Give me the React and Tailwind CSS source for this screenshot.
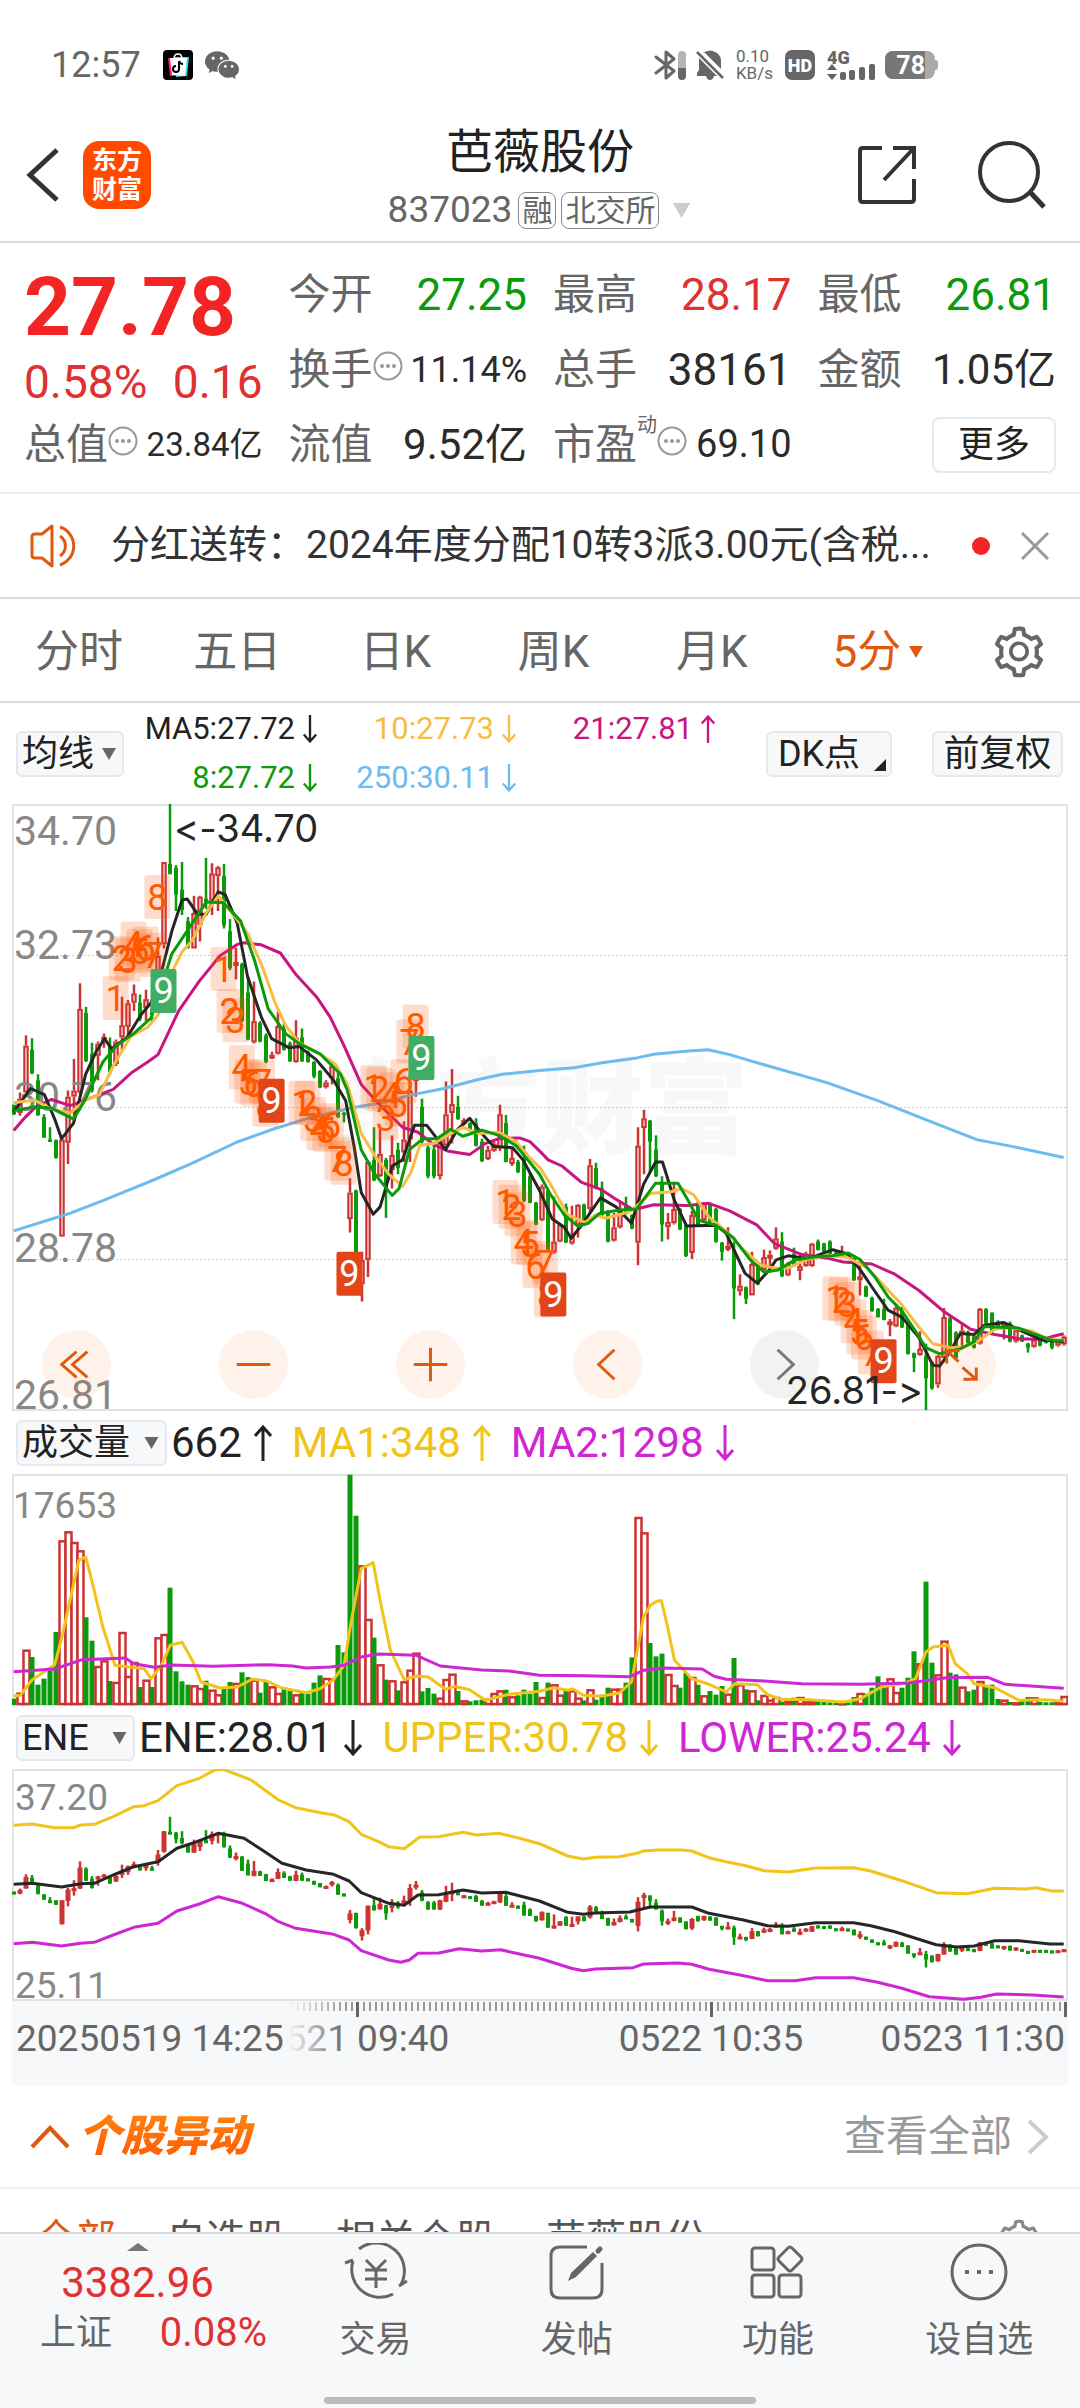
import React from 'react';
import { AiOutlineSetting } from 'react-icons/ai';
import { IoLogoWechat } from 'react-icons/io5';

const GREEN = '#0a9a0a';
const RED = '#cc3333';
const GRAY = '#888888';

/* ----------  Market data  ---------- */
// one row per 5-minute bar: [up, high, body top, body bottom, low, volume top]
const BARS = [
  [0, 795, 795, 818, 820, 865], [1, 765, 780, 815, 822, 847], [1, 625, 650, 765, 765, 718], [0, 632, 660, 718, 720, 740],
  [0, 720, 735, 820, 822, 823], [0, 818, 825, 875, 876, 805], [0, 850, 880, 886, 886, 780], [0, 880, 882, 925, 927, 665],
  [1, 880, 880, 1118, 1118, 390], [1, 760, 775, 888, 940, 363], [1, 683, 760, 775, 835, 395], [1, 497, 560, 765, 770, 420],
  [0, 555, 570, 688, 690, 621], [0, 643, 670, 760, 765, 691], [1, 640, 645, 675, 735, 767], [1, 620, 628, 640, 655, 750],
  [0, 630, 650, 715, 720, 812], [1, 635, 640, 695, 700, 815], [1, 530, 600, 630, 660, 665], [1, 538, 546, 604, 630, 797],
  [1, 500, 522, 545, 565, 755], [0, 525, 545, 585, 590, 830], [1, 513, 536, 558, 590, 808], [0, 541, 560, 575, 590, 830],
  [1, 385, 430, 510, 540, 681], [1, 200, 200, 402, 412, 671], [0, 58, 205, 230, 230, 532], [0, 208, 215, 280, 320, 783],
  [0, 200, 268, 318, 330, 813], [0, 335, 345, 410, 412, 823], [1, 283, 325, 412, 412, 825], [1, 283, 285, 355, 395, 833],
  [0, 190, 290, 300, 315, 811], [1, 203, 228, 295, 330, 838], [1, 210, 213, 235, 320, 852], [0, 205, 235, 355, 363, 833],
  [0, 340, 370, 460, 465, 815], [1, 410, 445, 455, 488, 818], [0, 447, 450, 590, 592, 786], [0, 480, 520, 635, 637, 800],
  [1, 493, 590, 642, 645, 808], [0, 590, 595, 640, 642, 847], [0, 620, 625, 690, 693, 815], [1, 665, 672, 680, 683, 828],
  [1, 567, 602, 670, 672, 848], [0, 595, 610, 660, 662, 835], [0, 640, 645, 688, 690, 840], [1, 588, 630, 690, 692, 852],
  [0, 608, 630, 688, 690, 845], [0, 662, 665, 690, 692, 850], [0, 688, 690, 725, 730, 817], [0, 710, 712, 752, 754, 795],
  [1, 735, 740, 752, 755, 803], [1, 690, 700, 730, 745, 805], [0, 715, 730, 825, 827, 704], [0, 812, 815, 820, 838, 726],
  [1, 975, 1010, 1075, 1108, 193], [0, 1003, 1005, 1155, 1160, 316], [1, 1155, 1175, 1235, 1277, 465], [1, 930, 935, 1175, 1217, 626],
  [0, 850, 930, 980, 982, 682], [1, 855, 915, 970, 972, 762], [0, 925, 930, 1010, 1072, 808], [1, 870, 918, 955, 1000, 810],
  [0, 888, 905, 950, 965, 840], [1, 835, 880, 912, 935, 813], [1, 720, 760, 880, 935, 778], [1, 690, 727, 730, 775, 727],
  [0, 780, 800, 885, 890, 843], [0, 888, 900, 970, 975, 833], [0, 888, 905, 970, 975, 850], [1, 875, 880, 970, 978, 862],
  [1, 738, 818, 895, 900, 806], [1, 707, 793, 815, 890, 790], [0, 773, 800, 830, 832, 842], [1, 828, 832, 838, 845, 870],
  [0, 838, 840, 858, 860, 873], [0, 828, 840, 895, 897, 870], [0, 878, 885, 933, 935, 868], [1, 895, 905, 928, 930, 865],
  [1, 885, 890, 908, 910, 848], [1, 795, 818, 900, 908, 840], [0, 820, 840, 935, 936, 838], [1, 900, 925, 940, 945, 858],
  [0, 930, 935, 960, 962, 855], [0, 895, 925, 1030, 1033, 838], [0, 960, 970, 1035, 1036, 850], [0, 1033, 1035, 1088, 1090, 815],
  [1, 990, 995, 1078, 1080, 860], [0, 1003, 1005, 1150, 1152, 817], [1, 1020, 1130, 1157, 1160, 822], [1, 1085, 1088, 1130, 1132, 853],
  [0, 1037, 1045, 1132, 1134, 840], [1, 1042, 1115, 1135, 1138, 840], [1, 1038, 1040, 1090, 1120, 862], [0, 1037, 1040, 1085, 1088, 870],
  [1, 928, 943, 1050, 1060, 837], [0, 937, 950, 1000, 1002, 868], [0, 983, 1000, 1065, 1067, 853], [0, 1053, 1055, 1130, 1132, 832],
  [1, 1060, 1095, 1128, 1130, 835], [1, 1030, 1055, 1095, 1098, 835], [0, 1020, 1040, 1060, 1064, 817], [0, 1063, 1065, 1098, 1100, 741],
  [1, 850, 895, 1133, 1188, 320], [1, 807, 828, 852, 965, 366], [0, 832, 834, 885, 960, 698], [0, 870, 905, 970, 972, 738],
  [0, 970, 985, 1088, 1130, 730], [1, 1060, 1082, 1095, 1125, 791], [1, 985, 1050, 1085, 1088, 824], [0, 1048, 1050, 1100, 1102, 832],
  [0, 1088, 1090, 1165, 1168, 788], [1, 1055, 1065, 1158, 1173, 800], [0, 1033, 1035, 1088, 1090, 823], [1, 1033, 1035, 1078, 1082, 855],
  [0, 1038, 1040, 1080, 1085, 842], [0, 1048, 1050, 1130, 1133, 853], [0, 1131, 1133, 1155, 1177, 827], [1, 1095, 1140, 1146, 1153, 850],
  [0, 1130, 1150, 1245, 1320, 743], [1, 1210, 1238, 1252, 1262, 822], [0, 1240, 1242, 1270, 1283, 837], [1, 1155, 1185, 1262, 1262, 840],
  [0, 1183, 1185, 1235, 1237, 870], [1, 1150, 1168, 1200, 1202, 854], [1, 1152, 1162, 1170, 1195, 868], [1, 1095, 1122, 1148, 1150, 860],
  [0, 1107, 1130, 1215, 1217, 874], [1, 1180, 1185, 1213, 1215, 872], [0, 1145, 1160, 1190, 1192, 862], [1, 1160, 1190, 1202, 1225, 860],
  [1, 1155, 1160, 1190, 1192, 873], [1, 1133, 1135, 1190, 1192, 872], [0, 1125, 1130, 1150, 1152, 866], [0, 1133, 1135, 1155, 1157, 874],
  [0, 1127, 1130, 1160, 1162, 876], [0, 1155, 1157, 1165, 1166, 878], [1, 1140, 1155, 1165, 1168, 876], [0, 1158, 1160, 1170, 1172, 876],
  [0, 1168, 1170, 1225, 1226, 860], [1, 1185, 1215, 1225, 1262, 848], [0, 1238, 1240, 1265, 1266, 850], [0, 1265, 1268, 1300, 1302, 832],
  [0, 1293, 1295, 1315, 1316, 798], [0, 1270, 1295, 1322, 1323, 822], [1, 1320, 1325, 1330, 1362, 804], [1, 1285, 1292, 1338, 1340, 845],
  [0, 1290, 1300, 1340, 1342, 832], [0, 1323, 1325, 1405, 1407, 802], [0, 1402, 1404, 1415, 1450, 723], [1, 1350, 1393, 1408, 1410, 759],
  [0, 1380, 1410, 1465, 1543, 514], [0, 1423, 1425, 1490, 1493, 757], [1, 1408, 1410, 1480, 1488, 792], [1, 1293, 1315, 1415, 1416, 691],
  [0, 1313, 1318, 1385, 1388, 787], [0, 1350, 1353, 1415, 1418, 792], [1, 1330, 1348, 1358, 1390, 829], [0, 1348, 1352, 1378, 1380, 843],
  [0, 1358, 1362, 1390, 1392, 838], [1, 1293, 1295, 1380, 1382, 812], [0, 1293, 1296, 1330, 1332, 825], [0, 1303, 1305, 1355, 1356, 823],
  [0, 1323, 1326, 1345, 1346, 866], [1, 1328, 1332, 1345, 1370, 868], [0, 1326, 1330, 1375, 1377, 875], [1, 1343, 1347, 1375, 1378, 876],
  [0, 1358, 1360, 1375, 1376, 872], [0, 1378, 1380, 1390, 1402, 860], [1, 1368, 1370, 1388, 1390, 861], [0, 1368, 1370, 1385, 1387, 875],
  [0, 1368, 1370, 1378, 1380, 876], [0, 1373, 1376, 1390, 1394, 876], [1, 1370, 1373, 1385, 1388, 875], [1, 1360, 1363, 1382, 1385, 857],
];

const MA_LINES = [
  { color: '#6cbcf0', points: '41,1104 200,1062 300,1030 450,978 560,938 690,886 800,853 900,827 1020,803 1110,790 1200,770 1290,755 1390,733 1460,720 1568,711 1668,704 1750,692 1850,680 1900,671 2000,663 2058,660 2120,672 2220,697 2400,740 2550,785 2700,835 2840,881 2940,897 3090,924' },
  { color: '#c9157f', points: '41,858 75,825 105,800 150,782 205,797 250,783 330,757 385,715 430,690 460,672 520,565 580,492 640,430 690,402 710,398 760,403 815,423 860,475 920,530 960,580 1000,650 1050,745 1110,800 1170,850 1215,862 1260,892 1300,908 1365,917 1410,890 1450,878 1510,876 1540,885 1568,908 1593,930 1633,945 1690,985 1748,1003 1793,1028 1840,1052 1900,1040 2000,1042 2058,1036 2120,1055 2200,1090 2250,1135 2330,1162 2400,1170 2450,1180 2533,1185 2600,1210 2670,1250 2740,1300 2820,1345 2890,1358 2960,1368 3030,1370 3060,1362 3090,1356' },
  { color: '#262626', points: '41,812 90,755 130,770 160,830 180,878 215,840 250,720 280,665 305,633 325,658 370,630 410,575 440,545 470,470 500,370 530,293 545,291 575,328 600,328 635,273 655,280 690,350 720,480 760,580 790,633 840,655 870,652 920,685 970,735 1005,785 1030,900 1050,1010 1085,1063 1105,1045 1140,945 1170,930 1205,845 1240,845 1295,905 1330,855 1365,828 1400,865 1435,897 1490,900 1520,930 1568,1005 1605,1075 1640,1095 1660,1122 1690,1090 1745,1023 1790,1045 1835,1085 1870,990 1905,935 1925,935 1960,1030 1995,1092 2080,1090 2110,1110 2165,1208 2200,1232 2235,1200 2255,1175 2290,1165 2350,1172 2420,1150 2460,1160 2500,1200 2540,1250 2580,1298 2620,1315 2670,1365 2710,1433 2730,1435 2760,1400 2790,1355 2830,1358 2860,1335 2915,1328 2970,1350 3030,1372 3090,1375' },
  { color: '#f6bd45', points: '41,790 100,783 150,805 205,815 250,783 290,770 330,700 380,628 430,605 460,575 500,470 530,420 560,392 600,325 635,283 670,320 720,375 760,450 800,545 830,600 870,643 920,665 975,695 1010,745 1050,865 1090,920 1130,965 1170,995 1195,960 1220,895 1260,890 1300,870 1345,850 1390,865 1450,862 1500,885 1540,925 1570,950 1600,990 1650,1065 1700,1083 1730,1065 1760,1073 1830,1057 1860,1035 1890,1012 1950,1008 1980,1000 2015,1015 2060,1070 2110,1105 2160,1150 2210,1187 2250,1195 2290,1195 2340,1175 2400,1165 2460,1168 2520,1195 2570,1240 2620,1285 2670,1340 2710,1380 2760,1390 2800,1388 2840,1375 2890,1345 2930,1340 3000,1350 3040,1368 3090,1372' },
  { color: '#0a9a0a', points: '41,810 100,800 150,803 215,830 250,780 300,690 340,650 390,620 440,582 480,480 500,425 560,350 600,298 650,300 700,345 740,440 780,560 830,620 870,645 930,670 990,720 1010,760 1050,905 1090,965 1140,1017 1160,1000 1190,905 1230,878 1270,878 1310,855 1345,872 1400,857 1450,870 1500,895 1568,965 1600,1015 1640,1065 1680,1093 1710,1085 1740,1062 1800,1053 1850,1050 1905,987 1970,987 2000,1030 2030,1078 2080,1090 2130,1120 2180,1175 2220,1205 2260,1200 2310,1175 2370,1167 2420,1165 2465,1158 2500,1175 2540,1215 2580,1265 2620,1300 2660,1350 2690,1390 2730,1405 2790,1393 2830,1375 2860,1338 2960,1342 3000,1355 3060,1373 3090,1373' },
];

const VOLUME_LINES = [
  { color: '#f0c419', points: '41,857 60,855 95,808 160,763 180,685 230,450 250,440 265,500 300,650 335,765 420,775 440,805 470,765 495,705 530,696 562,755 585,815 640,833 690,830 735,806 775,812 820,833 890,847 930,835 970,808 1000,765 1020,640 1050,475 1085,457 1105,570 1135,720 1175,808 1210,797 1245,800 1295,837 1320,828 1365,838 1410,870 1480,852 1568,843 1610,832 1650,840 1665,836 1695,855 1745,858 1800,848 1835,815 1870,620 1890,585 1910,572 1922,571 1940,650 1960,750 2010,805 2060,822 2110,845 2135,820 2200,823 2230,853 2270,867 2350,868 2450,875 2500,865 2560,830 2630,818 2660,805 2690,725 2710,710 2755,705 2775,760 2810,790 2830,820 2890,832 2960,870 3040,868 3090,873' },
  { color: '#cf26d4', points: '41,784 160,776 240,748 365,743 390,760 450,771 500,764 620,768 780,763 850,767 890,773 960,770 1000,765 1050,740 1100,731 1210,735 1280,767 1400,779 1480,782 1568,795 1700,796 1830,799 1870,780 1930,773 2040,776 2075,798 2110,807 2220,812 2330,820 2500,822 2640,818 2750,802 2870,801 2920,822 3090,834' },
];

const ENE_LINES = [
  { color: '#f0c419', points: '41,376 95,372 160,383 215,383 235,375 275,373 330,350 390,320 420,317 460,302 515,257 580,235 625,210 650,208 730,240 810,300 860,323 940,340 970,344 1015,365 1050,403 1100,425 1130,440 1175,446 1220,411 1275,410 1345,397 1385,405 1450,400 1510,415 1568,431 1610,450 1650,468 1695,477 1730,472 1800,470 1850,460 1870,453 1910,450 1980,450 2010,453 2060,473 2110,485 2170,498 2220,512 2290,516 2370,504 2480,503 2530,513 2620,542 2720,578 2810,581 2890,565 2980,567 3010,563 3055,573 3090,573' },
  { color: '#262626', points: '41,553 95,550 180,561 235,551 275,550 330,525 390,500 460,485 515,445 560,430 635,400 710,415 770,455 820,490 890,510 970,523 1015,543 1050,578 1130,610 1175,616 1215,585 1275,584 1345,570 1400,579 1470,577 1568,603 1650,637 1695,643 1730,639 1830,636 1890,621 2010,621 2060,640 2160,660 2230,677 2290,679 2370,668 2480,668 2530,677 2600,695 2720,734 2780,741 2830,738 2890,722 2960,722 3050,732 3090,732' },
  { color: '#cf26d4', points: '41,731 95,727 180,738 235,730 275,727 330,705 390,682 460,670 515,633 580,612 635,590 700,608 770,640 810,665 860,685 970,703 1015,720 1050,752 1130,780 1165,787 1190,780 1215,760 1275,759 1335,746 1400,753 1455,749 1500,760 1568,775 1660,805 1695,812 1730,807 1840,803 1870,792 1970,789 2010,793 2060,808 2150,825 2230,842 2310,842 2370,833 2480,833 2550,847 2620,865 2700,890 2800,898 2850,892 2895,882 3000,885 3090,891' },
];

// sequence counts drawn beside the bars: [label, x, y]
const COUNTS = [
  [1, 337, 534], [2, 355, 436], [3, 372, 440], [4, 389, 400], [5, 406, 418], [6, 424, 412], [7, 445, 428], [8, 458, 286],
  [1, 650, 462], [2, 668, 565], [3, 685, 588], [4, 703, 703], [5, 720, 738], [6, 737, 745], [7, 762, 738], [8, 772, 795],
  [1, 877, 790], [2, 894, 790], [3, 911, 830], [4, 929, 853], [5, 946, 856], [6, 963, 845], [7, 981, 927], [8, 999, 937],
  [1, 1086, 752], [2, 1103, 757], [3, 1121, 828], [4, 1138, 770], [5, 1156, 793], [6, 1173, 737], [7, 1190, 640], [8, 1208, 603],
  [1, 1469, 1033], [2, 1487, 1045], [3, 1504, 1063], [4, 1522, 1132], [5, 1539, 1135], [6, 1556, 1190], [7, 1583, 1182], [8, 1590, 1262],
  [1, 2427, 1269], [2, 2445, 1272], [3, 2462, 1283], [4, 2480, 1325], [5, 2497, 1352], [6, 2510, 1365], [7, 2530, 1402],
];

const NINES = [
  ['#3fae63', 476, 516], ['#e2451a', 790, 785], ['#e2451a', 1016, 1209],
  ['#3fae63', 1225, 680], ['#e2451a', 1608, 1260], ['#e2451a', 2567, 1423],
];

/* ----------  Scales  ---------- */
const W = 1056;
const barX = (i) => 2 + 6 * i;
const sx = (v) => (v - 36) / 2.904;
const priceY = (v) => (v - 58) / 2.45;
const volumeY = (v) => (v - 191) / 3;
const eneY = (v) => (v - 207) / 3;

const toPrice = (v) => 34.7 - ((v - 58) / 1485) * 7.89;
const priceToEne = (v) => ((37.2 - toPrice(v)) / 12.09) * 231;

const toPath = (points, y) =>
  points
    .split(' ')
    .map((p, i) => {
      const [px, py] = p.split(',').map(Number);
      return `${i ? 'L' : 'M'}${sx(px).toFixed(1)} ${y(py).toFixed(1)}`;
    })
    .join('');

/* ----------  Small parts  ---------- */
function Arrow({ up, className = 'w-[18px] h-[36px]' }) {
  return (
    <svg viewBox="0 0 18 36" className={className} fill="none" stroke="currentColor" strokeWidth="3">
      <path d={up ? 'M9 36V2M1 11L9 2L17 11' : 'M9 0V34M1 25L9 34L17 25'} />
    </svg>
  );
}

function Caret({ className }) {
  return (
    <svg viewBox="0 0 14 12" className={className} fill="currentColor">
      <path d="M0 0H14L7 12Z" />
    </svg>
  );
}

function Dots() {
  return (
    <svg viewBox="0 0 30 30" className="w-[30px] h-[30px] shrink-0 mb-2" fill="none" stroke="#999" strokeWidth="2">
      <circle cx="15" cy="15" r="13.5" />
      <g fill="#999" stroke="none">
        <circle cx="9" cy="15" r="2" />
        <circle cx="15" cy="15" r="2" />
        <circle cx="21" cy="15" r="2" />
      </g>
    </svg>
  );
}

function Picker({ label, value, caret = 'w-[14px] h-3', className }) {
  return (
    <label className={`relative flex shrink-0 items-center ${className}`}>
      <select
        aria-label={label}
        className="h-[46px] w-full appearance-none rounded-md border-2 border-[#e6e8ec] bg-[#f7f8fa] pl-1 text-[36px] leading-[42px] text-[#222]"
      >
        <option>{value}</option>
      </select>
      <span className="pointer-events-none absolute right-2 text-[#666]">
        <Caret className={caret} />
      </span>
    </label>
  );
}

function Quote({ label, value, color = 'text-[#2b2b2b]', size = 'text-[44px]', dots, sup }) {
  return (
    <div className="flex h-[75px] items-center justify-between whitespace-nowrap">
      <span className="flex items-center text-[42px] text-[#666]">
        {label}
        {sup && <sup className="mb-5 text-[20px]">{sup}</sup>}
        {dots && <Dots />}
      </span>
      <span className={`${color} ${size}`}>{value}</span>
    </div>
  );
}

/* ----------  Header  ---------- */
function StatusBar() {
  return (
    <div className="flex h-[100px] items-center pt-[30px] pl-[51px] pr-[142px] text-[#666]">
      <span className="text-[36px]">12:57</span>
      <svg viewBox="0 0 30 30" className="ml-[22px] w-[30px] h-[30px]">
        <rect width="30" height="30" rx="4" fill="#000" />
        <path d="M5 8H20L22 25L7 26Z" fill="#ff2457" />
        <path d="M11 7H26L24 26L13 27Z" fill="#25e5e5" />
        <path d="M7 8H24L22 26L9 25Z" fill="#fff" />
        <path d="M11 9Q11 4 15 4Q19 4 19 9" fill="none" stroke="#fff" strokeWidth="1.5" />
        <path d="M16 11V19A3 3 0 1 1 13 16M16 11Q17 14 20 14" fill="none" stroke="#000" strokeWidth="2" />
      </svg>
      <IoLogoWechat className="ml-3 w-[34px] h-[34px]" />
      <div className="ml-auto flex items-center">
        <svg viewBox="0 0 34 30" className="w-[34px] h-[30px]" fill="none" stroke="currentColor" strokeWidth="3">
          <path d="M2 7L20 21L12 28V2L20 9L2 23" strokeLinejoin="round" strokeLinecap="round" />
          <path d="M28 5V15" stroke="#b5b5b5" strokeWidth="8" strokeLinecap="round" />
          <path d="M28 18V26" strokeWidth="8" strokeLinecap="round" />
          <path d="M24 14H32V18H24Z" fill="#b5b5b5" stroke="none" />
        </svg>
        <svg viewBox="0 0 28 30" className="ml-2 w-[28px] h-[30px]" fill="currentColor">
          <path d="M7 3Q14 -2 21 3Q25 6 25 11V19L9 3ZM3 8L21 26H18Q17 30 14 30Q11 30 10 26H1V23L3 20Z" />
          <path d="M1 2L27 28" stroke="currentColor" strokeWidth="2.5" />
        </svg>
        <div className="ml-3 flex flex-col text-[17px] leading-[17px]">
          <span>0.10</span>
          <span>KB/s</span>
        </div>
        <span className="ml-3 flex h-[30px] w-[30px] items-center justify-center rounded-[7px] bg-[#666] text-[18px] font-black text-white">
          HD
        </span>
        <div className="relative ml-3 h-[30px] w-[48px]">
          <span className="absolute left-0 top-0 text-[18px] font-black leading-[16px]">4G</span>
          <svg viewBox="0 0 48 30" className="w-[48px] h-[30px]" fill="currentColor">
            <path d="M0 20L5 14L10 20ZM0 24H10L5 30Z" />
            <rect x="13" y="22" width="6" height="8" rx="2" />
            <rect x="22" y="20" width="6" height="10" rx="2" />
            <rect x="32" y="17" width="6" height="13" rx="2" />
            <rect x="42" y="14" width="6" height="16" rx="2" />
          </svg>
        </div>
        <div className="ml-[10px] flex items-center">
          <span className="flex h-[28px] w-[50px] items-center overflow-hidden rounded-lg bg-[#aaa]">
            <span className="flex h-full w-[40px] items-center justify-end bg-[#777] text-[25px] font-bold leading-none text-white">
              78
            </span>
          </span>
          <span className="h-[10px] w-[3px] rounded-r bg-[#aaa]" />
        </div>
      </div>
    </div>
  );
}

function TitleBar() {
  return (
    <header className="relative flex h-[143px] items-center justify-between border-b-2 border-[#dcdcdc] pt-2 pl-[26px] pr-[34px]">
      <div className="flex items-center">
        <button aria-label="返回">
          <svg viewBox="0 0 34 54" className="w-[34px] h-[54px]" fill="none" stroke="#333" strokeWidth="5">
            <path d="M31 2L4 27L31 52" />
          </svg>
        </button>
        <a
          href="#home"
          className="ml-[23px] flex h-[68px] w-[68px] flex-col items-center justify-center rounded-2xl bg-[#ff4a00] text-[25px] font-bold leading-[29px] text-white"
        >
          <span>东方</span>
          <span>财富</span>
        </a>
      </div>
      <div className="absolute inset-x-0 top-5 flex flex-col items-center">
        <h1 className="text-[47px] leading-[64px] text-[#222]">芭薇股份</h1>
        <div className="flex h-[52px] items-center text-[#666]">
          <span className="text-[37px]">837023</span>
          <span className="ml-[6px] flex h-[37px] items-center rounded-lg border border-[#888] px-[3px] text-[30px]">融</span>
          <span className="ml-[5px] flex h-[37px] items-center rounded-lg border border-[#888] px-[3px] text-[30px]">北交所</span>
          <Caret className="ml-3 w-[21px] h-[15px] text-[#ccc]" />
        </div>
      </div>
      <div className="flex items-center gap-[62px]">
        <button aria-label="分享">
          <svg viewBox="0 0 58 58" className="w-[58px] h-[58px]" fill="none" stroke="#333" strokeWidth="4">
            <path d="M24 2H5Q2 2 2 5V53Q2 56 5 56H53Q56 56 56 53V33M35 2H56V23M56 2L26 34" />
          </svg>
        </button>
        <button aria-label="搜索">
          <svg viewBox="0 0 68 68" className="w-[68px] h-[68px]" fill="none" stroke="#333" strokeWidth="4">
            <circle cx="31" cy="31" r="29" />
            <path d="M52 51L66 66" strokeWidth="5" />
          </svg>
        </button>
      </div>
    </header>
  );
}

function QuotePanel() {
  return (
    <section className="grid grid-cols-4 gap-x-[26px] border-b-2 border-[#eeeeee] px-6 pt-[14px] pb-[10px]">
      <div className="row-span-2 flex flex-col whitespace-nowrap text-[#e03030]">
        <strong className="text-[82px] font-bold leading-[100px] text-[#f22424]">27.78</strong>
        <div className="flex justify-between text-[46px] leading-[50px]">
          <span>0.58%</span>
          <span>0.16</span>
        </div>
      </div>
      <Quote label="今开" value="27.25" color="text-[#0a9a0a]" />
      <Quote label="最高" value="28.17" color="text-[#e03030]" />
      <Quote label="最低" value="26.81" color="text-[#0a9a0a]" />
      <Quote label="换手" value="11.14%" size="text-[36px]" dots />
      <Quote label="总手" value="38161" />
      <Quote label="金额" value="1.05亿" size="text-[42px]" />
      <Quote label="总值" value="23.84亿" size="text-[33px]" dots />
      <Quote label="流值" value="9.52亿" size="text-[42px]" />
      <Quote label="市盈" value="69.10" size="text-[38px]" sup="动" dots />
      <div className="flex items-center justify-end">
        <button className="h-[56px] w-[124px] rounded-lg border-2 border-[#e6e8ec] text-[36px] leading-[50px] text-[#222]">更多</button>
      </div>
    </section>
  );
}

function Notice() {
  return (
    <section className="flex h-[105px] items-center border-b-2 border-[#dcdcdc] pl-[30px] pr-[31px]">
      <svg viewBox="0 0 50 44" className="w-[50px] h-[44px] shrink-0" fill="none" stroke="#dd5a10" strokeWidth="3">
        <path d="M22 2V42L12 34H5Q2 34 2 31V13Q2 10 5 10H12Z" strokeLinejoin="round" />
        <path d="M30 12A12 12 0 0 1 30 32M30 3A20 20 0 0 1 30 41" />
      </svg>
      <p className="ml-[31px] whitespace-nowrap text-[39px] text-[#333]">分红送转：2024年度分配10转3派3.00元(含税...</p>
      <span className="ml-auto h-[18px] w-[18px] shrink-0 rounded-full bg-[#f22424]" />
      <button aria-label="关闭" className="ml-[31px]">
        <svg viewBox="0 0 28 28" className="w-7 h-7" stroke="#999" strokeWidth="3">
          <path d="M1 1L27 27M27 1L1 27" />
        </svg>
      </button>
    </section>
  );
}

function PeriodTabs() {
  return (
    <nav className="flex h-[104px] items-center border-b-2 border-[#dcdcdc] pt-1 text-[44px] text-[#666]">
      {['分时', '五日', '日K', '周K', '月K'].map((t) => (
        <button key={t} className="flex-1">{t}</button>
      ))}
      <button className="flex flex-1 items-center justify-center gap-2 pl-2 text-[#dd5a10]">
        5分
        <Caret className="w-[14px] h-3" />
      </button>
      <button aria-label="设置" className="flex w-[123px] justify-center">
        <AiOutlineSetting className="w-[58px] h-[58px]" />
      </button>
    </nav>
  );
}

/* ----------  Charts  ---------- */
function MaItem({ text, up, color }) {
  return (
    <span className={`flex h-[49px] items-center justify-end gap-2 ${color}`}>
      {text}
      <Arrow up={up} className="w-[14px] h-7" />
    </span>
  );
}

function MaLegend() {
  return (
    <div className="flex h-[101px] items-center pl-4 pr-[17px]">
      <Picker label="均线" value="均线" className="w-[108px]" />
      <div className="mr-[51px] grid flex-1 grid-cols-[193px_1fr_1fr] whitespace-nowrap text-[31px]">
        <MaItem text="MA5:27.72" color="text-[#222]" />
        <MaItem text="10:27.73" color="text-[#f6bd45]" />
        <MaItem text="21:27.81" up color="text-[#c9157f]" />
        <MaItem text="8:27.72" color="text-[#0a9a0a]" />
        <MaItem text="250:30.11" color="text-[#6cbcf0]" />
      </div>
      <button className="relative h-[46px] w-[126px] rounded-md border-2 border-[#e6e8ec] bg-[#f7f8fa] pr-5 text-[36px] leading-[42px] text-[#222]">
        DK点
        <svg viewBox="0 0 12 12" className="absolute right-1 bottom-1 w-3 h-3">
          <path d="M12 0V12H0Z" fill="#222" />
        </svg>
      </button>
      <button className="ml-[40px] h-[46px] w-[131px] rounded-md border-2 border-[#e6e8ec] bg-[#f7f8fa] text-[36px] leading-[42px] text-[#222]">
        前复权
      </button>
    </div>
  );
}

function Lines({ lines, y }) {
  return lines.map((l) => (
    <path key={l.color} d={toPath(l.points, y)} fill="none" stroke={l.color} strokeWidth="3" strokeLinejoin="round" />
  ));
}

function Frame({ height }) {
  return <rect x="1" y="1" width={W - 2} height={height - 2} fill="none" stroke="#e2e2e2" strokeWidth="2" />;
}

const CONTROLS = [
  { label: '最早', d: 'M35 22L20 35L35 48M46 22L31 35L46 48' },
  { label: '缩小', d: 'M18 35H52' },
  { label: '放大', d: 'M18 35H52M35 18V52' },
  { label: '向左', d: 'M42 20L26 35L42 50' },
  { label: '向右', d: 'M28 20L44 35L28 50', off: true },
  { label: '全屏', d: 'M32 32L20 21M20 34V21H33M36 38L50 50M50 38V50H37' },
];

function PriceChart() {
  return (
    <div className="relative mx-3">
      <svg viewBox={`0 0 ${W} 607`} className="block w-full">
        <text x="528" y="342" textAnchor="middle" fontSize="104" fontWeight="900" fill="#f8f8f8">东方财富</text>
        <Frame height={607} />
        {[151, 303, 455].map((y) => (
          <path key={y} d={`M0 ${y}.5H${W}`} stroke="#cccccc" strokeDasharray="2 2" />
        ))}

        {BARS.map(([up, high, top, bottom, low], i) =>
          up ? (
            <g key={i} stroke={RED} strokeWidth="2.5">
              <path d={`M${barX(i)} ${priceY(high)}V${priceY(top)}M${barX(i)} ${priceY(bottom)}V${priceY(low)}`} />
              <rect x={barX(i) - 1.75} y={priceY(top) + 1} width="3.5" height={Math.max(priceY(bottom) - priceY(top) - 2, 2)} fill="#f3c9c9" strokeWidth="2" />
            </g>
          ) : (
            <g key={i} stroke={GREEN}>
              <path d={`M${barX(i)} ${priceY(high)}V${priceY(low)}`} strokeWidth="2.5" />
              <path d={`M${barX(i)} ${priceY(top)}V${priceY(bottom)}`} strokeWidth="4" />
            </g>
          )
        )}

        <g fontSize="41" fill={GRAY}>
          <text x="2" y="41">34.70</text>
          <text x="2" y="155">32.73</text>
          <text x="2" y="307">30.76</text>
          <text x="2" y="458">28.78</text>
          <text x="2" y="605">26.81</text>
        </g>

        <Lines lines={MA_LINES} y={priceY} />

        {COUNTS.map(([n, x, y]) => (
          <g key={`${x}-${y}`}>
            <rect x={sx(x) - 13} y={priceY(y) - 22} width="26" height="44" rx="3" fill="#ff5500" fillOpacity="0.2" />
            <text x={sx(x)} y={priceY(y) + 13} textAnchor="middle" fontSize="36" fill="#ff5a00">{n}</text>
          </g>
        ))}
        {NINES.map(([color, x, y]) => (
          <g key={x}>
            <rect x={sx(x) - 13} y={priceY(y) - 22} width="26" height="44" rx="2" fill={color} />
            <text x={sx(x)} y={priceY(y) + 12} textAnchor="middle" fontSize="36" fill="#fff">9</text>
          </g>
        ))}

        {/* Inter joins "->" into one arrow unless calt is off */}
        <g fontSize="38" fill="#262626" className="font-[Inter,sans-serif] [font-feature-settings:'calt'_0]">
          <text x="162" y="38">&lt;-34.70</text>
          <text x="911" y="600" textAnchor="end">26.81-&gt;</text>
        </g>
      </svg>

      <div className="absolute inset-x-0 bottom-3 flex justify-between pl-[30px] pr-[72px]">
        {CONTROLS.map((c) => (
          <button
            key={c.label}
            aria-label={c.label}
            className={`h-[69px] w-[69px] rounded-full ${c.off ? 'bg-black/5 text-[#777]' : 'bg-[#ff5500]/8 text-[#dd5a10]'}`}
          >
            <svg viewBox="0 0 70 70" className="w-full h-full" fill="none" stroke="currentColor" strokeWidth="3">
              <path d={c.d} />
            </svg>
          </button>
        ))}
      </div>
    </div>
  );
}

function IndicatorBar({ picker, width, items }) {
  return (
    <div className="flex h-[63px] items-center whitespace-nowrap pl-4 text-[42px]">
      <Picker label={picker} value={picker} caret="w-[15px] h-3" className={width} />
      <div className="ml-1 flex items-center gap-5">
        {items.map(([text, up, color]) => (
          <span key={text} className={`flex items-center gap-3 ${color}`}>
            {text}
            <Arrow up={up} />
          </span>
        ))}
      </div>
    </div>
  );
}

function VolumeChart() {
  return (
    <div className="mx-3">
      <svg viewBox={`0 0 ${W} 232`} className="block w-full">
        <Frame height={232} />
        {BARS.map(([up, , , , , vol], i) => {
          const y = volumeY(vol);
          return up && i !== 56 ? (
            <rect key={i} x={barX(i) - 2.5} y={y + 1} width="6" height={Math.max(229 - y, 1)} fill="#fff" stroke={RED} strokeWidth="2.5" />
          ) : (
            <rect key={i} x={barX(i) - 2.5} y={y} width="5" height={231 - y} fill={GREEN} />
          );
        })}
        <text x="1" y="44" fontSize="37" fill={GRAY}>17653</text>
        <Lines lines={VOLUME_LINES} y={volumeY} />
      </svg>
    </div>
  );
}

function EneChart() {
  return (
    <div className="mx-3">
      <svg viewBox={`0 0 ${W} 232`} className="block w-full">
        <Frame height={232} />
        {BARS.map(([up, high, top, bottom, low], i) => {
          const body = Math.max(priceToEne(bottom) - priceToEne(top), 3);
          return (
            <g key={i} fill={up ? RED : GREEN}>
              <rect x={barX(i) - 1.25} y={priceToEne(high)} width="2.5" height={priceToEne(low) - priceToEne(high)} />
              <rect x={barX(i) - (up ? 2.5 : 2)} y={priceToEne(top)} width={up ? 5 : 4} height={body} />
            </g>
          );
        })}
        <g fontSize="37" fill={GRAY}>
          <text x="3" y="41">37.20</text>
          <text x="3" y="229">25.11</text>
        </g>
        <Lines lines={ENE_LINES} y={eneY} />
      </svg>
    </div>
  );
}

function TimeAxis() {
  return (
    <div className="mx-3 bg-[#f7f8fa]">
      <svg viewBox={`0 0 ${W} 85`} className="block w-full" fontSize="37" fill="#666">
        <defs>
          <linearGradient id="axis-fade">
            <stop offset="0" stopColor="#f7f8fa" />
            <stop offset="1" stopColor="#f7f8fa" stopOpacity="0" />
          </linearGradient>
        </defs>
        {BARS.map((_, i) => i > 45 && <rect key={i} x={barX(i) + 1} y="1" width="2" height="9" fill="#999" />)}
        <rect x="344" y="1" width="3" height="15" />
        <rect x="698" y="1" width="3" height="15" />
        <rect x="1052" y="1" width="3" height="15" />
        <text x="345" y="50" textAnchor="middle">0521 09:40</text>
        <rect x="240" y="0" width="36" height="80" fill="#f7f8fa" />
        <rect x="276" y="0" width="58" height="80" fill="url(#axis-fade)" />
        <text x="4" y="50">20250519 14:25</text>
        <text x="699" y="50" textAnchor="middle">0522 10:35</text>
        <text x="1053" y="50" textAnchor="end">0523 11:30</text>
      </svg>
    </div>
  );
}

/* ----------  Bottom  ---------- */
function Movers() {
  return (
    <section>
      <div className="flex h-[103px] items-center justify-between border-b-2 border-[#eeeeee] pl-[30px] pr-[30px]">
        <h2 className="flex items-center gap-2">
          <svg viewBox="0 0 40 24" className="w-[40px] h-6" fill="none" stroke="#dd5a10" strokeWidth="4">
            <path d="M2 22L20 3L38 22" />
          </svg>
          <span className="bg-gradient-to-b from-[#ff8a10] to-[#ff5000] bg-clip-text pr-2 text-[43px] font-black italic text-transparent">
            个股异动
          </span>
        </h2>
        <a href="#all" className="flex items-center gap-[14px] text-[42px] text-[#999]">
          查看全部
          <svg viewBox="0 0 24 36" className="w-6 h-9" fill="none" stroke="#ccc" strokeWidth="4">
            <path d="M3 2L20 18L3 34" />
          </svg>
        </a>
      </div>
      <div className="h-[43px] overflow-hidden">
        <div className="flex h-[102px] items-center gap-[50px] pl-9 pr-[38px] text-[40px] text-[#555]">
          <button className="text-[#dd5a10]">全部</button>
          <button>自选股</button>
          <button>相关个股</button>
          <button>芭薇股份</button>
          <AiOutlineSetting className="ml-auto w-[46px] h-[46px] text-[#888]" />
        </div>
      </div>
    </section>
  );
}

function BottomBar() {
  const items = [
    {
      label: '交易',
      art: (
        <>
          <path d="M15 6A28 28 0 0 1 56 43M49 51A28 28 0 0 1 9 18M1 20L9 17M55 43L63 38" />
          <path d="M22 17L32 27L42 17M21 27H43M21 36H43M32 27V45" />
        </>
      ),
    },
    {
      label: '发帖',
      art: (
        <>
          <path d="M42 4H15Q6 4 6 13V46Q6 55 15 55H48Q57 55 57 46V20" />
          <path d="M23 38L26 30L48 9L52 13L31 34Z" fill="#666" stroke="none" />
          <path d="M53 8L55 6" strokeWidth="5" strokeLinecap="round" />
        </>
      ),
    },
    {
      label: '功能',
      art: (
        <>
          <rect x="6" y="5" width="22" height="22" rx="3" />
          <rect x="6" y="32" width="22" height="22" rx="3" />
          <rect x="33" y="32" width="22" height="22" rx="3" />
          <path d="M42 5Q44 3 46 5L55 14Q57 16 55 18L46 27Q44 29 42 27L33 18Q31 16 33 14Z" />
        </>
      ),
    },
    {
      label: '设自选',
      art: (
        <>
          <circle cx="32" cy="29" r="27" />
          <path d="M20 27V31M32 27V31M44 27V31" strokeWidth="4" />
        </>
      ),
    },
  ];

  return (
    <footer className="border-t-2 border-[#d6d8dc] bg-[#f7f8fa]">
      <div className="flex h-[163px] text-[36px] text-[#666]">
        <button className="flex w-[275px] flex-col items-center pt-[9px]">
          <svg viewBox="0 0 22 8" className="w-[22px] h-2" fill="#777">
            <path d="M11 0L22 8H0Z" />
          </svg>
          <span className="mt-1 text-[42px] leading-[56px] text-[#e03030]">3382.96</span>
          <span className="flex w-full items-center justify-between pl-10 pr-2 leading-[44px]">
            上证
            <span className="text-[40px] text-[#e03030]">0.08%</span>
          </span>
        </button>
        {items.map((it) => (
          <button key={it.label} className="flex flex-1 flex-col items-center pt-[9px]">
            <svg viewBox="0 0 64 60" className="w-[64px] h-[60px]" fill="none" stroke="#666" strokeWidth="3">
              {it.art}
            </svg>
            <span className="mt-3 leading-[50px]">{it.label}</span>
          </button>
        ))}
      </div>
      <div className="flex justify-center pb-1">
        <span className="h-[7px] w-2/5 rounded-full bg-[#bbbbbb]" />
      </div>
    </footer>
  );
}

export default function App() {
  return (
    <div className="bg-white font-[Roboto,'Noto_Sans_CJK_SC',sans-serif]">
      <StatusBar />
      <TitleBar />
      <QuotePanel />
      <Notice />
      <PeriodTabs />
      <MaLegend />
      <PriceChart />
      <IndicatorBar
        picker="成交量"
        width="w-[151px]"
        items={[
          ['662', true, 'text-[#222]'],
          ['MA1:348', true, 'text-[#f0c419]'],
          ['MA2:1298', false, 'text-[#cf26d4]'],
        ]}
      />
      <VolumeChart />
      <IndicatorBar
        picker="ENE"
        width="w-[119px]"
        items={[
          ['ENE:28.01', false, 'text-[#222]'],
          ['UPPER:30.78', false, 'text-[#f0c419]'],
          ['LOWER:25.24', false, 'text-[#cf26d4]'],
        ]}
      />
      <EneChart />
      <TimeAxis />
      <Movers />
      <BottomBar />
    </div>
  );
}
